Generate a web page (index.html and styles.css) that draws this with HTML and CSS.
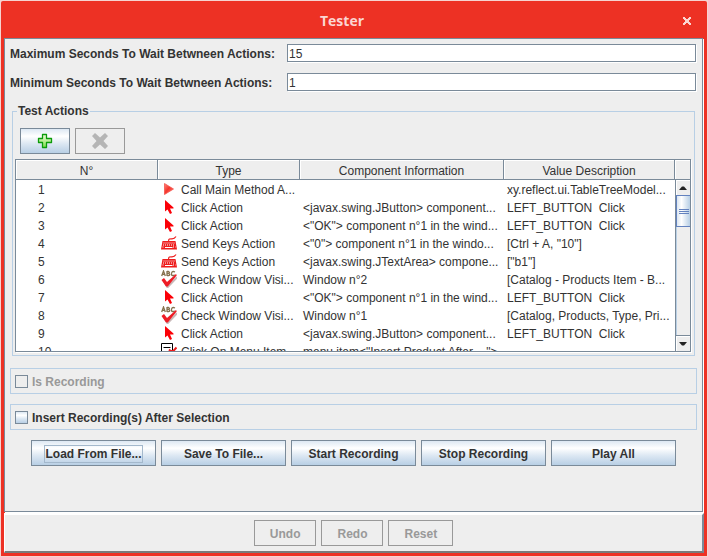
FILE: index.html
```html
<!DOCTYPE html>
<html lang="en">
<head>
<meta charset="utf-8">
<title>Tester</title>
<link rel="stylesheet" href="styles.css">
</head>
<body>
<svg class="sprites" aria-hidden="true">
  <defs>
    <linearGradient id="play-fill" x1="0" y1="0" x2="1" y2="1">
      <stop offset="0" stop-color="#ff8a80"/><stop offset=".45" stop-color="#f5352c"/><stop offset="1" stop-color="#ff8a80"/>
    </linearGradient>
    <linearGradient id="plus-fill" x1="0" y1="0" x2="0" y2="1">
      <stop offset="0" stop-color="#f2fde0"/><stop offset="1" stop-color="#7fe04a"/>
    </linearGradient>
  </defs>
  <symbol id="play" viewBox="0 0 16 16"><path d="M3.500 2.500 12.500 8 3.500 13.500Z" fill="url(#play-fill)" stroke="#f4544c" stroke-width=".8"/></symbol>
  <symbol id="cursor" viewBox="0 0 16 16"><path d="M4 1V12.500L6.500 10.500 9 15 11 14 9 9.500H12.500V8.500Z" fill="#fb0007"/></symbol>
  <symbol id="keyboard" viewBox="0 0 16 16">
    <path d="M7.500 6.500C7.500 3.500 9 3.800 11 3.800S14 3 15 1.500" fill="none" stroke="#ee1c1c" stroke-width="1.200"/>
    <path d="M1.500 6h13l1.500 8.500H0Z" fill="#ee1c1c"/>
    <path d="M2.500 8h11M2 10h12M1.500 12h2m8.500 0h2.500" stroke="#fff" stroke-dasharray="1 1"/>
    <path d="M4 12.500h7.500" stroke="#fff"/>
  </symbol>
  <symbol id="check" viewBox="0 0 16 18">
    <g fill="none" stroke="#85714e" stroke-width="1.300">
      <path d="M.7 6 2.500 1 4.300 6M1.200 4.300h2.600M6 1v5M6 1.500h1.500q2 1 0 2H6m1.500 0q2.500 1.200 0 2.200H6M14 2q-3-1.500-3.500 1.500T14 5"/>
    </g>
    <path d="M2 9.500 6 16.500 15.500 6.500" transform="translate(.5 .8)" fill="none" stroke="#c8b8b8" stroke-width="2"/>
    <path d="M.5 10 3 8 6 12 15 4 15.800 5.200 6.800 16.500H5Z" fill="#ee1c25"/>
  </symbol>
  <symbol id="menu" viewBox="0 0 16 16">
    <path d="M.5.5h11v14H.5Z" fill="#fff" stroke="#000"/>
    <path d="M2.500 4.500h7M2.500 8.500h7" stroke="#000"/>
    <path d="M8 6.500 11 9.500 15.500 4.500M10 8h4" fill="none" stroke="#ee1c1c" stroke-width="2"/>
  </symbol>
</svg>

<div class="window">
  <header class="titlebar">
    <h1>Tester</h1>
    <button class="close" type="button" aria-label="Close">
      <svg viewBox="0 0 8 8"><path d="M0 0h2v1h1v1h2V1h1V0h2v2H7v1H6v2h1v1h1v2H6V7H5V6H3v1H2v1H0V6h1V5h1V3H1V2H0Z" fill="#fbd5d2"/></svg>
    </button>
  </header>

  <main class="content">
    <div class="fields">
      <label for="max">Maximum Seconds To Wait Betwneen Actions:</label>
      <input id="max" type="text" value="15">
      <label for="min">Minimum Seconds To Wait Betwneen Actions:</label>
      <input id="min" type="text" value="1">
    </div>

    <fieldset class="actions">
      <legend>Test Actions</legend>
      <div class="toolbar">
        <button class="btn" type="button" aria-label="Add">
          <svg width="16" height="16" viewBox="0 0 16 16"><path d="M5.500 1.500h4v4h5v4h-5v5h-4v-5h-4v-4h4Z" fill="url(#plus-fill)" stroke="#0c9c0c" stroke-width="1.300" stroke-linejoin="round"/></svg>
        </button>
        <button class="btn" type="button" aria-label="Remove" disabled>
          <svg width="16" height="16" viewBox="0 0 16 16"><path d="M0 3 3 0 8 4.500 13 0 16 3 11.500 8 16 13 13 16 8 11.500 3 16 0 13 4.500 8Z" fill="#b5b5b5"/></svg>
        </button>
      </div>
      <div class="grid">
        <div class="viewport">
          <table>
            <colgroup><col class="c-num"><col class="c-type"><col><col class="c-value"></colgroup>
            <thead><tr><th>N°</th><th>Type</th><th>Component Information</th><th>Value Description</th></tr></thead>
            <tbody>
              <tr><td>1</td><td><svg><use href="#play"/></svg>Call Main Method A...</td><td></td><td>xy.reflect.ui.TableTreeModel...</td></tr>
              <tr><td>2</td><td><svg><use href="#cursor"/></svg>Click Action</td><td>&lt;javax.swing.JButton&gt; component...</td><td>LEFT_BUTTON&nbsp; Click</td></tr>
              <tr><td>3</td><td><svg><use href="#cursor"/></svg>Click Action</td><td>&lt;"OK"&gt; component n°1 in the wind...</td><td>LEFT_BUTTON&nbsp; Click</td></tr>
              <tr><td>4</td><td><svg><use href="#keyboard"/></svg>Send Keys Action</td><td>&lt;"0"&gt; component n°1 in the windo...</td><td>[Ctrl + A, "10"]</td></tr>
              <tr><td>5</td><td><svg><use href="#keyboard"/></svg>Send Keys Action</td><td>&lt;javax.swing.JTextArea&gt; compone...</td><td>["b1"]</td></tr>
              <tr><td>6</td><td><svg class="tall"><use href="#check"/></svg>Check Window Visi...</td><td>Window n°2</td><td>[Catalog - Products Item - B...</td></tr>
              <tr><td>7</td><td><svg><use href="#cursor"/></svg>Click Action</td><td>&lt;"OK"&gt; component n°1 in the wind...</td><td>LEFT_BUTTON&nbsp; Click</td></tr>
              <tr><td>8</td><td><svg class="tall"><use href="#check"/></svg>Check Window Visi...</td><td>Window n°1</td><td>[Catalog, Products, Type, Pri...</td></tr>
              <tr><td>9</td><td><svg><use href="#cursor"/></svg>Click Action</td><td>&lt;javax.swing.JButton&gt; component...</td><td>LEFT_BUTTON&nbsp; Click</td></tr>
              <tr><td>10</td><td><svg><use href="#menu"/></svg>Click On Menu Item</td><td>menu item&lt;"Insert Product After ..."&gt;</td><td></td></tr>
            </tbody>
          </table>
        </div>
        <div class="side">
          <div class="corner"></div>
          <div class="scrollbar">
            <button class="arrow" type="button" aria-label="Scroll up"><svg viewBox="0 0 8 4"><path d="M0 4 3 0.500H5L8 4Z"/></svg></button>
            <div class="track"><div class="thumb"><i></i><i></i><i></i></div></div>
            <button class="arrow down" type="button" aria-label="Scroll down"><svg viewBox="0 0 8 4"><path d="M0 0 3 3.500H5L8 0Z"/></svg></button>
          </div>
        </div>
      </div>
    </fieldset>

    <label class="option disabled"><input type="checkbox" disabled><span>Is Recording</span></label>
    <label class="option"><input type="checkbox"><span>Insert Recording(s) After Selection</span></label>

    <div class="commands">
      <button class="btn" type="button"><span class="focus">Load From File...</span></button>
      <button class="btn" type="button">Save To File...</button>
      <button class="btn" type="button">Start Recording</button>
      <button class="btn" type="button">Stop Recording</button>
      <button class="btn" type="button">Play All</button>
    </div>
  </main>

  <footer class="footer">
    <button class="btn" type="button" disabled>Undo</button>
    <button class="btn" type="button" disabled>Redo</button>
    <button class="btn" type="button" disabled>Reset</button>
  </footer>
</div>
</body>
</html>
```
FILE: styles.css
```css
* { box-sizing: border-box; }

body {
  margin: 0;
  padding: 1px;
  min-height: 100vh;
  display: flex;
  background: #f6d3d0;
  color: #333;
  font: 12px/14px "Liberation Sans", Arial, sans-serif;
}

.sprites { position: absolute; width: 0; height: 0; }

.window {
  flex: 1;
  min-width: 0;
  display: flex;
  flex-direction: column;
  padding: 0 3px 3px;
  background: #ed3124;
  border-radius: 2px 2px 0 0;
}

.titlebar {
  height: 37px;
  display: grid;
  grid-template-columns: 40px 1fr 40px;
  align-items: center;
}
.titlebar h1 {
  grid-column: 2;
  margin: 0;
  padding: 2px 24px 0 0;
  text-align: center;
  color: #fbd5d2;
  font: bold 14px/16px "Open Sans", sans-serif;
}
.close {
  justify-self: end;
  width: 10px;
  height: 10px;
  margin: 2px 12px 0 0;
  padding: 1px;
  border: 0;
  background: none;
}
.close svg { display: block; width: 8px; height: 8px; }

.content {
  flex: 1;
  padding: 5px 5px 0;
  background: #eee;
  border: 1px solid #7a8a99;
  box-shadow: 1px 1px 0 #fff;
  margin-right: 1px;
}

.fields {
  display: grid;
  grid-template-columns: 277px 1fr;
  row-gap: 11px;
  align-items: center;
  padding-right: 1px;
}
.fields label, legend, .option, .btn { font-weight: bold; }
.fields label, .option span { padding-top: 2px; }
.fields input {
  width: 100%;
  height: 18px;
  padding: 2px 1px 0;
  border: 1px solid #7a8a99;
  border-radius: 0;
  box-shadow: 1px 1px 0 #fff;
  background: #fff;
  color: #333;
  font: inherit;
}

.actions {
  min-width: 0;
  margin: 13px 2px 0;
  padding: 10px 3px 3px 2px;
  border: 1px solid #b8cfe5;
}
legend { height: 14px; margin-left: 2px; padding: 0 1px; }

.toolbar { display: flex; gap: 5px; padding: 0 5px; margin-bottom: 5px; }
.toolbar .btn { width: 50px; padding: 0; }

.btn {
  height: 26px;
  padding: 2px 0 0;
  display: flex;
  align-items: center;
  justify-content: center;
  border: 1px solid #7a8a99;
  background: linear-gradient(#dde8f3, #fff 30%, #dde8f3 60%, #b8cfe5);
  color: #333;
  font-family: inherit;
  font-size: 12px;
  line-height: 14px;
}
.btn:disabled { background: #eee; border-color: #999; color: #999; }
.focus { padding: 1px 0; outline: 1px solid #a3b8cc; }

.grid {
  display: flex;
  height: 193px;
  border: 1px solid #7a8a99;
  background: #fff;
  box-shadow: 1px 1px 0 #fff;
}
.viewport { flex: 1; min-width: 0; overflow: hidden; }

table { width: 100%; table-layout: fixed; border-collapse: separate; border-spacing: 0; }
.c-num, .c-type { width: 142px; }
.c-value { width: 171px; }
th {
  height: 20px;
  padding: 2px 0 0;
  background: #eee;
  border-right: 1px solid #7a8a99;
  border-bottom: 1px solid #7a8a99;
  box-shadow: inset 1px 1px 0 #fff;
  font-weight: normal;
}
td {
  height: 18px;
  padding: 2px 0 0 3px;
  overflow: hidden;
  white-space: nowrap;
}
td:first-child { padding-left: 22px; }
td:nth-child(2) { display: flex; align-items: center; }
td svg { flex: none; width: 16px; height: 16px; margin: -2px 4px 0 0; }
td svg.tall { height: 18px; }

.side { width: 15px; display: flex; flex-direction: column; }
.corner {
  height: 20px;
  background: #eee;
  border-bottom: 1px solid #7a8a99;
  box-shadow: inset 1px 1px 0 #fff;
}
.scrollbar {
  flex: 1;
  display: flex;
  flex-direction: column;
  border-left: 1px solid #7a8a99;
  background: #eee;
}
.arrow {
  height: 15px;
  padding: 0;
  border: 0;
  display: grid;
  place-items: center;
  background: #eee;
  box-shadow: inset 1px 1px 0 #fff;
}
.arrow.down { height: 16px; border-top: 1px solid #7a8a99; }
.arrow svg { width: 8px; height: 4px; fill: #222; }
.track { flex: 1; box-shadow: inset 1px 0 0 #b8cfe5; }
.thumb {
  height: 32px;
  display: flex;
  flex-direction: column;
  align-items: center;
  justify-content: center;
  gap: 1px;
  border: 1px solid #6382bf;
  border-width: 1px 0 1px 1px;
  background: linear-gradient(to right, #dbe6f1, #fff 35%, #b8cfe5);
}
.thumb i { width: 10px; height: 1px; background: #6382bf; }

.option {
  display: flex;
  align-items: center;
  gap: 4px;
  height: 26px;
  margin-top: 10px;
  padding-left: 4px;
  border: 1px solid #b8cfe5;
}
.actions + .option { margin-top: 12px; }
.option input {
  appearance: none;
  width: 13px;
  height: 13px;
  margin: 0;
  border: 1px solid #7a8a99;
  background: linear-gradient(#dde8f3, #fff 30%, #dde8f3 60%, #b8cfe5);
}
.disabled { color: #999; }
.disabled input { background: #eee; }

.commands { display: flex; justify-content: center; gap: 5px; margin-top: 10px; }
.commands .btn { width: 125px; }

.footer {
  display: flex;
  justify-content: center;
  gap: 5px;
  padding: 5px 0;
  margin-top: 1px;
  background: #eee;
  border: solid #fff;
  border-width: 2px 2px 2px 1px;
  border-right-color: #7a8a99;
  border-bottom-color: #7a7a7a;
}
.footer .btn { padding: 2px 15px 0; }
```
